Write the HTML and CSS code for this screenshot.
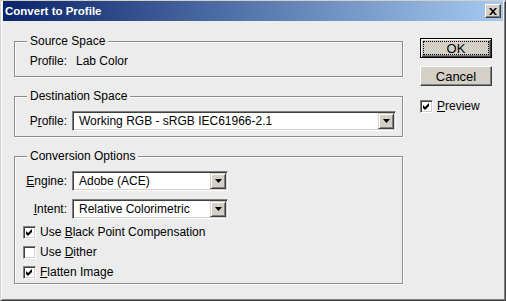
FILE: index.html
```html
<!DOCTYPE html>
<html lang="en">
<head>
  <meta charset="UTF-8" />
  <title>Convert to Profile</title>
  <link rel="stylesheet" href="styles.css">
</head>
<body>
  <div class="window">
    <div class="titlebar">
      <span class="title">Convert to Profile</span>
      <span class="close-btn">
        <svg width="8" height="7" viewBox="0 0 8 7"><path d="M0 0h2l2 2.2L6 0h2L5 3.5 8 7H6L4 4.8 2 7H0l3-3.5z" fill="#000"/></svg>
      </span>
    </div>

    <div class="content">
      <div class="main">
        <fieldset class="group group-source">
          <legend>Source Space</legend>
          <div class="row">
            <span class="label">Profile:</span>
            <span class="value">Lab Color</span>
          </div>
        </fieldset>

        <fieldset class="group group-dest">
          <legend>Destination Space</legend>
          <div class="row">
            <span class="label">P<u>r</u>ofile:</span>
            <div class="combo">
              <span class="combo-text">Working RGB - sRGB IEC61966-2.1</span>
              <span class="combo-btn"><svg width="7" height="4" viewBox="0 0 7 4"><path d="M0 0h7L3.5 4z" fill="#000"/></svg></span>
            </div>
          </div>
        </fieldset>

        <fieldset class="group group-options">
          <legend>Conversion Options</legend>
          <div class="row">
            <span class="label"><u>E</u>ngine:</span>
            <div class="combo combo-short">
              <span class="combo-text">Adobe (ACE)</span>
              <span class="combo-btn"><svg width="7" height="4" viewBox="0 0 7 4"><path d="M0 0h7L3.5 4z" fill="#000"/></svg></span>
            </div>
          </div>
          <div class="row row-gap">
            <span class="label"><u>I</u>ntent:</span>
            <div class="combo combo-short">
              <span class="combo-text">Relative Colorimetric</span>
              <span class="combo-btn"><svg width="7" height="4" viewBox="0 0 7 4"><path d="M0 0h7L3.5 4z" fill="#000"/></svg></span>
            </div>
          </div>
          <div class="checks">
            <div class="check">
              <span class="box"><svg width="7" height="7" viewBox="0 0 7 7"><path d="M0 2l2 2 4-4v3L2 7 0 5z" fill="#000"/></svg></span>
              <span>Use <u>B</u>lack Point Compensation</span>
            </div>
            <div class="check">
              <span class="box"></span>
              <span>Use <u>D</u>ither</span>
            </div>
            <div class="check">
              <span class="box"><svg width="7" height="7" viewBox="0 0 7 7"><path d="M0 2l2 2 4-4v3L2 7 0 5z" fill="#000"/></svg></span>
              <span><u>F</u>latten Image</span>
            </div>
          </div>
        </fieldset>
      </div>

      <div class="side">
        <div class="btn btn-default"><span class="btn-face focus">OK</span></div>
        <div class="btn"><span class="btn-face">Cancel</span></div>
        <div class="check check-preview">
          <span class="box"><svg width="7" height="7" viewBox="0 0 7 7"><path d="M0 2l2 2 4-4v3L2 7 0 5z" fill="#000"/></svg></span>
          <span><u>P</u>review</span>
        </div>
      </div>
    </div>
  </div>
</body>
</html>
```

FILE: styles.css
```css
* {
  margin: 0; padding: 0; box-sizing: border-box;
}
body {
  background: #ececec; color: #000;
  font-family: "Liberation Sans", Arial, sans-serif;
  font-size: 12px;
}
.window {
  width: 506px; height: 301px;
  background: #ececec;
  border: 1px solid;
  border-color: #d4d0c8 #404040 #404040 #d4d0c8;
  box-shadow: inset 1px 1px #fff, inset -1px -1px #808080;
  padding: 0 2px 2px 2px;
}
.titlebar {
  height: 20px;
  display: flex; align-items: center; justify-content: space-between;
  padding: 0 2px;
  background: linear-gradient(90deg, #0a246a, #a6caf0);
}
.title {
  color: #fff; font-weight: bold; font-size: 11.5px;
}
.close-btn {
  width: 16px; height: 14px;
  display: flex; align-items: center; justify-content: center;
  background: #d4d0c8;
  border: 1px solid;
  border-color: #fff #404040 #404040 #fff;
  box-shadow: inset -1px -1px #808080;
}
.content {
  display: flex; gap: 17px;
  padding: 13px 0 0 11px;
}
.main {
  width: 389px;
  display: flex; flex-direction: column; gap: 12px;
}
.group {
  border: 1px solid #8c8c8c;
  box-shadow: inset 1px 1px #fff, 1px 1px #fff;
  padding: 8px 6px 5px 8px;
}
.group legend {
  padding: 0 3px; margin-left: 4px;
  line-height: 14px;
  background: #ececec;
}
.group-source {
  padding: 6px 6px 8px 8px;
}
.group-options {
  padding: 8px 6px 1px 8px;
}
.row {
  display: grid;
  grid-template-columns: 44px 1fr;
  column-gap: 5px; align-items: center;
}
.row-gap {
  margin-top: 8px;
}
.label {
  text-align: right; line-height: 14px; white-space: nowrap;
}
.value {
  padding-left: 4px; line-height: 14px;
}
.combo {
  height: 20px;
  display: flex; align-items: center;
  background: #fff;
  border: 1px solid;
  border-color: #808080 #fff #fff #808080;
  box-shadow: inset 1px 1px #404040, inset -1px -1px #d4d0c8;
  padding: 1px;
}
.combo-short {
  width: 156px;
}
.combo-text {
  flex: 1; padding-left: 5px; line-height: 16px; white-space: nowrap;
}
.combo-btn {
  width: 16px; height: 16px;
  display: flex; align-items: center; justify-content: center;
  background: #d4d0c8;
  border: 1px solid;
  border-color: #d4d0c8 #404040 #404040 #d4d0c8;
  box-shadow: inset 1px 1px #fff, inset -1px -1px #808080;
}
.checks {
  margin-top: 3px;
}
.check {
  height: 20px;
  display: flex; align-items: center; gap: 4px;
}
.box {
  width: 13px; height: 13px;
  display: flex; align-items: center; justify-content: center;
  background: #fff;
  border: 1px solid;
  border-color: #808080 #fff #fff #808080;
  box-shadow: inset 1px 1px #404040, inset -1px -1px #d4d0c8;
}
.side {
  width: 72px;
  display: flex; flex-direction: column;
  padding-top: 4px;
}
.btn {
  height: 20px;
  display: flex; padding: 2px;
  background: #d4d0c8;
  border: 1px solid;
  border-color: #fff #404040 #404040 #fff;
  box-shadow: inset -1px -1px #808080;
  margin-bottom: 8px;
}
.btn-default {
  border: 1px solid #000;
  box-shadow: inset 1px 1px #fff, inset -1px -1px #404040, inset -2px -2px #808080;
}
.btn-face {
  flex: 1;
  display: flex; align-items: center; justify-content: center;
  border: 1px solid transparent;
  font-size: 13px;
}
.btn-face.focus {
  border: 1px dotted #000;
}
.check-preview {
  margin-top: 2px;
}
```
